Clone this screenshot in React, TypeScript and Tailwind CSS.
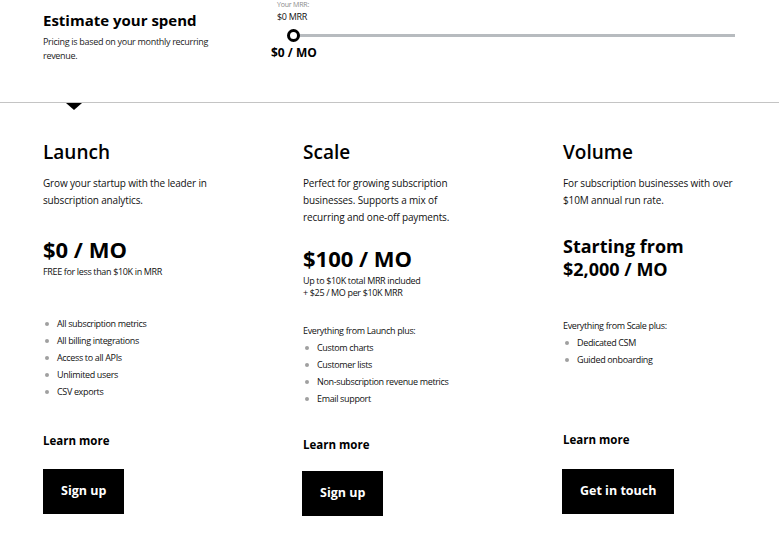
import React from "react";

const font = { fontFamily: '"Open Sans", "Noto Sans", sans-serif' };

function Bullets({ items }: { items: string[] }) {
  return (
    <ul className="flex flex-col">
      {items.map((t) => (
        <li key={t} className="flex items-center h-[17px] text-[9px] tracking-[-0.35px] text-[#111]">
          <span className="w-[4px] h-[4px] rounded-full bg-[#a0a0a0] ml-[2px] mr-[8px]" />
          {t}
        </li>
      ))}
    </ul>
  );
}

function Btn({ label }: { label: string }) {
  return (
    <div className="inline-flex items-center justify-center h-[45px] px-[18px] bg-black text-white text-[12.5px] font-bold">
      {label}
    </div>
  );
}

export default function App() {
  return (
    <div className="w-[779px] h-[556px] bg-white text-black overflow-hidden" style={font}>
      {/* Top */}
      <div className="relative h-[103px] border-b border-[#c4c4c4] flex">
        <div className="w-[271px] shrink-0 pl-[43px] pt-[10px]">
          <div className="text-[15px] leading-[20px] font-bold">Estimate your spend</div>
          <div className="mt-[5px] w-[185px] text-[9px] leading-[14px] tracking-[-0.3px] text-[#222]">
            Pricing is based on your monthly recurring revenue.
          </div>
        </div>
        <div className="flex-1 pr-[44px]">
          <div className="ml-[6px] text-[7px] leading-[9px] text-[#8a8a8a] tracking-[-0.2px]">Your MRR:</div>
          <div className="ml-[6px] mt-[2px] text-[9px] leading-[12px] tracking-[-0.3px] text-[#111]">$0 MRR</div>
          <div className="relative ml-[22px] mt-[6px] h-[12px] flex items-center">
            <div className="w-full h-[3px] bg-[#b7bbbf]" />
            <div className="absolute left-[-6px] top-0 w-[13px] h-[13px] rounded-full border-[3px] border-black bg-white" />
          </div>
          <div className="mt-[4px] text-[12px] leading-[16px] font-bold">$0 / MO</div>
        </div>
        <div className="absolute left-[66px] top-[103px] w-0 h-0 border-l-[8px] border-r-[8px] border-t-[7px] border-l-transparent border-r-transparent border-t-black" />
      </div>

      {/* Plans */}
      <div className="grid grid-cols-[260px_260px_1fr] pl-[43px] pt-[36px]">
        {/* Launch */}
        <div className="flex flex-col items-start">
          <div className="text-[19px] leading-[26px] font-semibold">Launch</div>
          <div className="mt-[10px] w-[200px] text-[10px] leading-[17px] tracking-[-0.15px] text-[#111]">
            Grow your startup with the leader in subscription analytics.
          </div>
          <div className="mt-[26px] text-[22px] leading-[28px] font-bold">$0 / MO</div>
          <div className="mt-[3px] text-[9px] leading-[12px] tracking-[-0.35px] text-[#111]">FREE for less than $10K in MRR</div>
          <div className="mt-[37px]">
            <Bullets items={["All subscription metrics", "All billing integrations", "Access to all APIs", "Unlimited users", "CSV exports"]} />
          </div>
          <div className="mt-[33px] text-[11.5px] leading-[16px] font-bold">Learn more</div>
          <div className="mt-[20px]">
            <Btn label="Sign up" />
          </div>
        </div>
        {/* Scale */}
        <div className="flex flex-col items-start">
          <div className="text-[19px] leading-[26px] font-semibold">Scale</div>
          <div className="mt-[10px] w-[160px] text-[10px] leading-[17px] tracking-[-0.15px] text-[#111]">
            Perfect for growing subscription businesses. Supports a mix of recurring and one-off payments.
          </div>
          <div className="mt-[18px] text-[22px] leading-[28px] font-bold">$100 / MO</div>
          <div className="mt-[3px] text-[9px] leading-[12px] tracking-[-0.35px] text-[#111]">
            Up to $10K total MRR included
            <br />+ $25 / MO per $10K MRR
          </div>
          <div className="mt-[23px] text-[9px] leading-[17px] tracking-[-0.35px] text-[#111]">Everything from Launch plus:</div>
          <Bullets items={["Custom charts", "Customer lists", "Non-subscription revenue metrics", "Email support"]} />
          <div className="mt-[30px] text-[11.5px] leading-[16px] font-bold">Learn more</div>
          <div className="mt-[18px] ml-[-1px]">
            <Btn label="Sign up" />
          </div>
        </div>
        {/* Volume */}
        <div className="flex flex-col items-start">
          <div className="text-[19px] leading-[26px] font-semibold">Volume</div>
          <div className="mt-[10px] w-[180px] text-[10px] leading-[17px] tracking-[-0.15px] text-[#111]">
            For subscription businesses with over $10M annual run rate.
          </div>
          <div className="mt-[26px] text-[18px] leading-[23px] font-bold">
            Starting from
            <br />
            $2,000 / MO
          </div>
          <div className="mt-[36px] text-[9px] leading-[17px] tracking-[-0.35px] text-[#111]">Everything from Scale plus:</div>
          <Bullets items={["Dedicated CSM", "Guided onboarding"]} />
          <div className="mt-[64px] text-[11.5px] leading-[16px] font-bold">Learn more</div>
          <div className="mt-[21px] ml-[-1px]">
            <Btn label="Get in touch" />
          </div>
        </div>
      </div>
    </div>
  );
}
